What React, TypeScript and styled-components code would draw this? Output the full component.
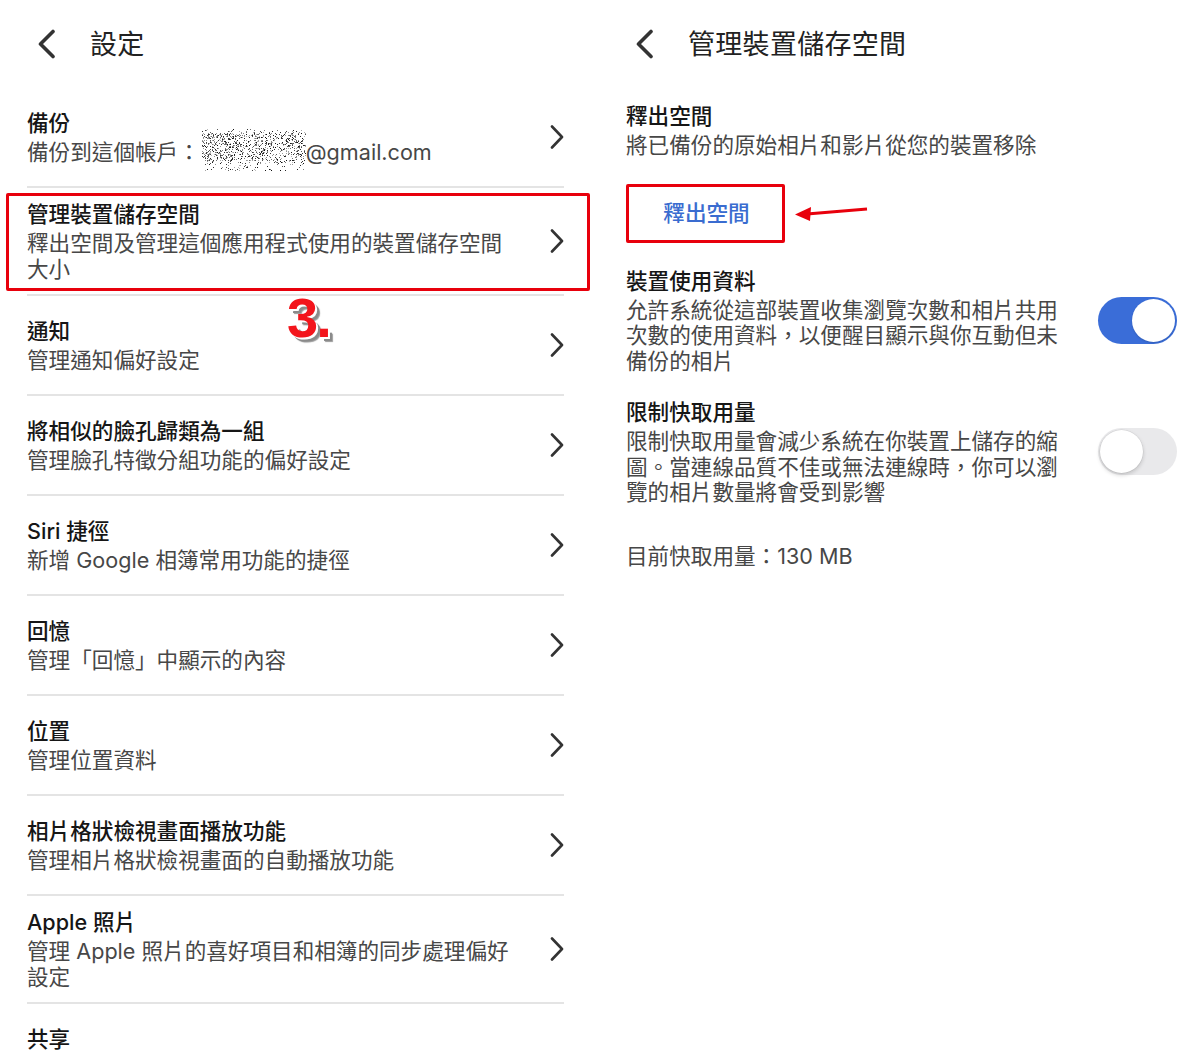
import React from 'react';
import styled, { createGlobalStyle } from 'styled-components';

const Global = createGlobalStyle`
  html, body { margin: 0; padding: 0; background: #ffffff; }
  body {
    font-family: Inter, "Noto Sans CJK TC", "Noto Sans", sans-serif;
    overflow: hidden;
    -webkit-font-smoothing: antialiased;
  }
`;

const Page = styled.div`
  display: grid;
  grid-template-columns: 600px 600px;
  width: 1200px;
  height: 1050px;
  overflow: hidden;
`;

const Column = styled.section`
  position: relative;
  display: flex;
  flex-direction: column;
`;

const Header = styled.header<{ $pad: number }>`
  height: 88px;
  display: flex;
  align-items: center;
  gap: 34px;
  padding-left: ${(p) => p.$pad}px;
  box-sizing: border-box;
`;

const HeaderTitle = styled.h1`
  margin: 0;
  font-size: 27px;
  font-weight: 400;
  line-height: 1;
  color: #222;
  letter-spacing: 0.3px;
`;

const List = styled.div`
  margin-left: 27px;
  width: 537px;
  display: flex;
  flex-direction: column;
`;

const Item = styled.div<{ $partial?: boolean }>`
  position: relative;
  box-sizing: border-box;
  min-height: 100px;
  padding: ${(p) => (p.$partial ? '21px 0 12px' : '12px 0')};
  border-bottom: 2px solid #e4e4e4;
  display: flex;
  align-items: ${(p) => (p.$partial ? 'flex-start' : 'center')};
  justify-content: space-between;
`;

const ItemText = styled.div`
  width: 492px;
  display: flex;
  flex-direction: column;
  gap: 3px;
`;

const Title = styled.div`
  font-size: 21.6px;
  line-height: 28px;
  font-weight: 500;
  color: #161616;
`;

const Sub = styled.div<{ $w?: number }>`
  font-size: 21.6px;
  line-height: 25.5px;
  font-weight: 400;
  color: #474747;
  ${(p) => (p.$w ? `width: ${p.$w}px;` : '')}
`;

const Highlight = styled.div`
  position: absolute;
  top: 5px;
  bottom: 3px;
  left: -21px;
  right: -26px;
  border: 3px solid #e8000c;
  border-radius: 2px;
  pointer-events: none;
`;

const StepMark = styled.div`
  position: absolute;
  left: 287px;
  top: 290px;
  font-family: "Liberation Sans", Arial, sans-serif;
  font-weight: 700;
  font-size: 56px;
  line-height: 1;
  color: #f3151c;
  text-shadow: 2px 2px 0 #fff, 4px 4px 0 #8a8a8a, 5px 5px 1px #9a9a9a;
  letter-spacing: -2px;
`;

const Blur = styled.span`
  position: relative;
  display: inline-block;
  width: 104px;
  height: 20px;
  vertical-align: -3px;
  margin-left: 2px;
  svg {
    position: absolute;
    left: 0;
    top: -14px;
  }
`;

const Panel = styled.div`
  padding: 14px 23px 0 26px;
  display: flex;
  flex-direction: column;
`;

const Block = styled.div`
  display: flex;
  flex-direction: column;
  gap: 3px;
`;

const ButtonRow = styled.div`
  margin-top: 25px;
  display: flex;
  align-items: center;
  gap: 10px;
`;

const Callout = styled.div`
  box-sizing: border-box;
  width: 159px;
  height: 59px;
  border: 3px solid #e8000c;
  border-radius: 2px;
  display: flex;
  align-items: center;
  justify-content: center;
  padding-left: 2px;
`;

const TextButton = styled.button`
  border: none;
  background: none;
  padding: 0;
  font-family: inherit;
  font-size: 21.6px;
  line-height: 28px;
  font-weight: 500;
  color: #3a6cd0;
  cursor: pointer;
`;

const SwitchRow = styled.div<{ $mt: number }>`
  margin-top: ${(p) => p.$mt}px;
  display: flex;
  align-items: center;
  justify-content: space-between;
`;

const Track = styled.div<{ $on: boolean }>`
  position: relative;
  box-sizing: border-box;
  width: 79px;
  height: 47px;
  border-radius: 24px;
  background: ${(p) => (p.$on ? '#3a6dd8' : '#e9e9eb')};
  display: flex;
  align-items: center;
  justify-content: ${(p) => (p.$on ? 'flex-end' : 'flex-start')};
  padding: 2px;
`;

const Knob = styled.div<{ $on: boolean }>`
  width: 43px;
  height: 43px;
  border-radius: 50%;
  background: #fff;
  box-shadow: ${(p) =>
    p.$on ? '0 1px 2px rgba(0,0,0,0.15)' : '0 2px 4px rgba(0,0,0,0.18), 0 0 0 0.5px rgba(0,0,0,0.08)'};
`;

const Footnote = styled.div`
  margin-top: 37px;
  font-size: 21.6px;
  line-height: 26px;
  color: #474747;
`;

const BackIcon = () => (
  <svg width="20" height="30" viewBox="0 0 20 30" aria-hidden>
    <path d="M17 2.5 L4.5 15 L17 27.5" fill="none" stroke="#333" strokeWidth="3.6" strokeLinecap="round" strokeLinejoin="round" />
  </svg>
);

const ChevronRight = () => (
  <svg width="14" height="24" viewBox="0 0 14 24" aria-hidden>
    <path d="M2 1.5 L12 12 L2 22.5" fill="none" stroke="#333" strokeWidth="2.6" strokeLinecap="round" strokeLinejoin="round" />
  </svg>
);

const Arrow = () => (
  <svg width="76" height="18" viewBox="0 0 76 18" aria-hidden>
    <line x1="12" y1="10" x2="72" y2="5" stroke="#e8000c" strokeWidth="3" />
    <polygon points="0,10.5 16,3 15,17" fill="#e8000c" />
  </svg>
);

const noiseDots = (() => {
  const out: { x: number; y: number; c: string }[] = [];
  let s = 987654;
  const rnd = () => {
    s = (Math.imul(s, 1103515245) + 12345) >>> 0;
    return s / 4294967296;
  };
  for (let i = 0; i < 1700; i++) {
    const x = Math.floor(rnd() * 104);
    const y = Math.floor(rnd() * 42);
    const dens = y > 3 && y < 32 ? 0.8 : 0.25;
    if (rnd() > dens) continue;
    const g = Math.floor(10 + rnd() * 180);
    out.push({ x, y, c: `rgb(${g},${g},${g})` });
  }
  return out;
})();

const Noise = () => (
  <Blur>
    <svg width="104" height="42" viewBox="0 0 104 42" aria-hidden>
      {noiseDots.map((d, i) => (
        <rect key={i} x={d.x} y={d.y} width="1" height="1" fill={d.c} />
      ))}
    </svg>
  </Blur>
);

type Entry = { title: string; sub?: React.ReactNode; highlight?: boolean; partial?: boolean };

const entries: Entry[] = [
  {
    title: '備份',
    sub: (
      <>
        備份到這個帳戶：<Noise />@gmail.com
      </>
    ),
  },
  { title: '管理裝置儲存空間', sub: '釋出空間及管理這個應用程式使用的裝置儲存空間大小', highlight: true },
  { title: '通知', sub: '管理通知偏好設定' },
  { title: '將相似的臉孔歸類為一組', sub: '管理臉孔特徵分組功能的偏好設定' },
  { title: 'Siri 捷徑', sub: '新增 Google 相簿常用功能的捷徑' },
  { title: '回憶', sub: '管理「回憶」中顯示的內容' },
  { title: '位置', sub: '管理位置資料' },
  { title: '相片格狀檢視畫面播放功能', sub: '管理相片格狀檢視畫面的自動播放功能' },
  { title: 'Apple 照片', sub: '管理 Apple 照片的喜好項目和相簿的同步處理偏好設定' },
  { title: '共享', partial: true },
];

export default function App() {
  return (
    <>
      <Global />
      <Page>
        <Column>
          <Header $pad={36}>
            <BackIcon />
            <HeaderTitle>設定</HeaderTitle>
          </Header>
          <List>
            {entries.map((e) => (
              <Item key={e.title} $partial={e.partial}>
                <ItemText>
                  <Title>{e.title}</Title>
                  {e.sub && <Sub>{e.sub}</Sub>}
                </ItemText>
                {!e.partial && <ChevronRight />}
                {e.highlight && <Highlight />}
              </Item>
            ))}
          </List>
          <StepMark>3.</StepMark>
        </Column>
        <Column>
          <Header $pad={34}>
            <BackIcon />
            <HeaderTitle>管理裝置儲存空間</HeaderTitle>
          </Header>
          <Panel>
            <Block>
              <Title>釋出空間</Title>
              <Sub>將已備份的原始相片和影片從您的裝置移除</Sub>
            </Block>
            <ButtonRow>
              <Callout>
                <TextButton>釋出空間</TextButton>
              </Callout>
              <Arrow />
            </ButtonRow>
            <SwitchRow $mt={24}>
              <Block>
                <Title>裝置使用資料</Title>
                <Sub $w={446}>允許系統從這部裝置收集瀏覽次數和相片共用次數的使用資料，以便醒目顯示與你互動但未備份的相片</Sub>
              </Block>
              <Track $on>
                <Knob $on />
              </Track>
            </SwitchRow>
            <SwitchRow $mt={24}>
              <Block>
                <Title>限制快取用量</Title>
                <Sub $w={446}>限制快取用量會減少系統在你裝置上儲存的縮圖。當連線品質不佳或無法連線時，你可以瀏覽的相片數量將會受到影響</Sub>
              </Block>
              <Track $on={false}>
                <Knob $on={false} />
              </Track>
            </SwitchRow>
            <Footnote>目前快取用量：130 MB</Footnote>
          </Panel>
        </Column>
      </Page>
    </>
  );
}
